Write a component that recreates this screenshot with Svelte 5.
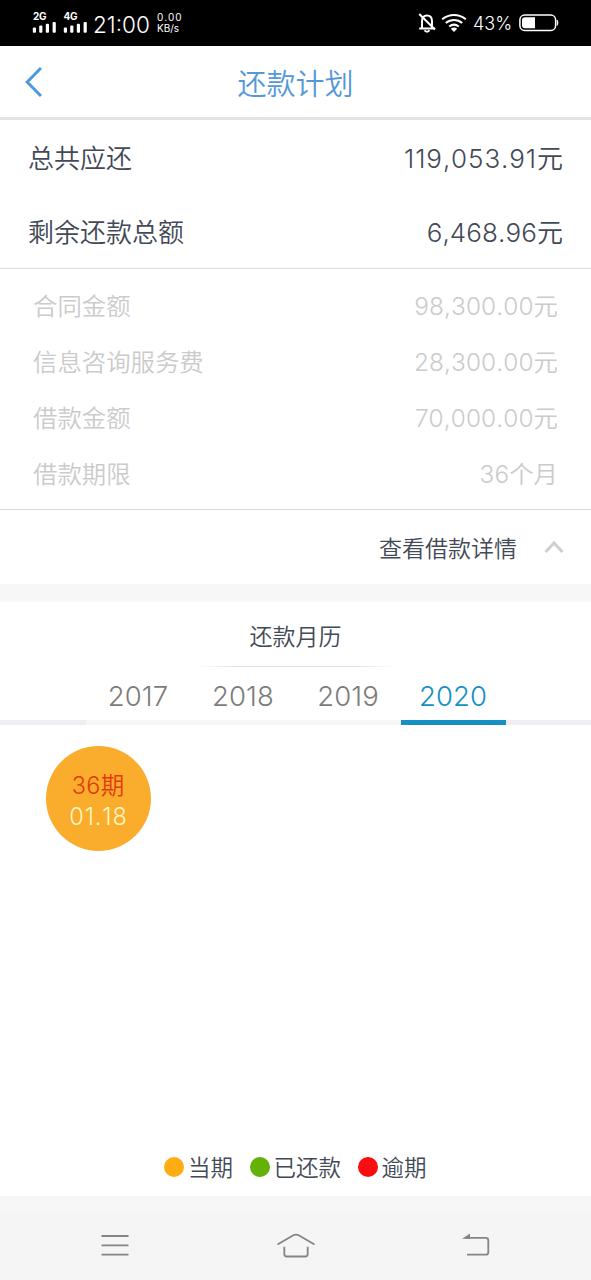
<script lang="ts">
  const totals = [
    { label: "总共应还", amount: "119,053.91", unit: "元" },
    { label: "剩余还款总额", amount: "6,468.96", unit: "元" },
  ];

  const details = [
    { label: "合同金额", amount: "98,300.00", unit: "元" },
    { label: "信息咨询服务费", amount: "28,300.00", unit: "元" },
    { label: "借款金额", amount: "70,000.00", unit: "元" },
    { label: "借款期限", amount: "36", unit: "个月" },
  ];

  const years = ["2017", "2018", "2019", "2020"];

  const periods: Record<string, { no: number; date: string; status: string }[]> = {
    "2020": [{ no: 36, date: "01.18", status: "current" }],
  };

  const legend = [
    { status: "current", label: "当期" },
    { status: "paid", label: "已还款" },
    { status: "overdue", label: "逾期" },
  ];

  let year = $state("2020");
  let expanded = $state(true);
  let shown = $derived(periods[year] ?? []);
</script>

{#snippet signal(label: string)}
  <div class="signal">
    <span>{label}</span>
    <svg width="24" height="11" viewBox="0 0 24 11" fill="#fff">
      <rect x="0.8" y="5.5" width="3.2" height="5.2" rx="1" />
      <rect x="7.2" y="3.6" width="3.2" height="7.1" rx="1" />
      <rect x="13.8" y="1.8" width="3.2" height="8.9" rx="1" />
      <rect x="20.6" y="0" width="3.2" height="10.7" rx="1" />
    </svg>
  </div>
{/snippet}

<div class="screen">
  <div class="status">
    {@render signal("2G")}
    {@render signal("4G")}
    <span class="clock">21:00</span>
    <div class="speed">
      <span class="rate">0.00</span>
      <span>KB/s</span>
    </div>
    <div class="status-right">
      <svg width="18" height="20" viewBox="0 0 18 20" fill="none" stroke="#fff" stroke-width="2">
        <path d="M4 15.5V8.2C4 4.6 6 2.5 9 2.5s5 2.1 5 5.7v7.3M1.200 15.500h15.600" />
        <path d="M6.500 17.300c1.200 1.800 3.800 1.800 5 0M1.200 1l15.800 15.500" />
      </svg>
      <svg class="wifi" width="26" height="20" viewBox="0 0 26 20" fill="none" stroke="#fff" stroke-width="2">
        <path d="M1.200 6.300c7-5.900 16.600-5.900 23.600 0M4.800 10c4.900-4.100 11.500-4.100 16.400 0M8.200 13.600c3-2.500 6.600-2.500 9.600 0" />
        <path d="M9.800 15.700c2-1.600 4.400-1.600 6.400 0L13 19z" fill="#fff" stroke="none" />
      </svg>
      <span class="percent">43%</span>
      <svg width="40" height="18" viewBox="0 0 40 18" fill="none">
        <rect x="0.9" y="1" width="35.7" height="15.5" rx="4.8" stroke="#fff" stroke-width="1.5" />
        <path d="M6 3.200h10v11.100H6a3 3 0 0 1-3-3V6.200a3 3 0 0 1 3-3z" fill="#fff" />
        <path d="M38 6c1.300.8 1.300 4.700 0 5.500z" fill="#fff" stroke="#fff" stroke-width="0.6" />
      </svg>
    </div>
  </div>

  <header class="header">
    <button type="button" class="back" aria-label="返回">
      <svg width="18" height="32" viewBox="0 0 18 32" fill="none" stroke="#4b9ae0" stroke-width="3">
        <path d="M17 2L3.200 16L17 30" />
      </svg>
    </button>
    <h1>还款计划</h1>
  </header>

  <section class="totals">
    {#each totals as row (row.label)}
      <div class="total-row">
        <span>{row.label}</span>
        <span><span class="num">{row.amount}</span>{row.unit}</span>
      </div>
    {/each}
  </section>

  {#if expanded}
    <section class="details">
      {#each details as row (row.label)}
        <div class="detail-row">
          <span>{row.label}</span>
          <span><span class="num">{row.amount}</span>{row.unit}</span>
        </div>
      {/each}
    </section>
  {/if}

  <button type="button" class="toggle" aria-expanded={expanded} onclick={() => (expanded = !expanded)}>
    <span>查看借款详情</span>
    <svg class:collapsed={!expanded} width="20" height="14" viewBox="0 0 20 14" fill="none" stroke="#cfcfcf" stroke-width="3">
      <path d="M1.500 12L10 3l8.500 9" />
    </svg>
  </button>

  <section class="calendar">
    <h2>还款月历</h2>
    <div class="divider"></div>
    <div class="tabs">
      {#each years as y (y)}
        <button type="button" class="tab num" class:tab-active={y === year} onclick={() => (year = y)}>{y}</button>
      {/each}
    </div>
    <div class="periods">
      {#each shown as p (p.no)}
        <div class="period {p.status}">
          <span class="period-no"><span class="num">{p.no}</span>期</span>
          <span class="period-date num">{p.date}</span>
        </div>
      {/each}
    </div>
    <div class="legend">
      {#each legend as item (item.status)}
        <div class="legend-item">
          <i class="dot {item.status}"></i>
          <span>{item.label}</span>
        </div>
      {/each}
    </div>
  </section>

  <nav class="nav">
    <svg width="28" height="24" viewBox="0 0 28 24" fill="none" stroke="#858585" stroke-width="1.800">
      <path d="M0.500 3h27M0.500 12.300h27M0.500 21.700h27" />
    </svg>
    <svg width="40" height="26" viewBox="0 0 40 26" fill="none" stroke="#858585" stroke-width="1.800" stroke-linejoin="round">
      <path d="M1.500 12.500L17.300 3.300q2.700-1.400 5.400 0L38.500 12.500" />
      <path d="M8.300 14.800v7.200q0 2.500 2.500 2.500h18.400q2.500 0 2.500-2.500v-7.200" />
    </svg>
    <svg width="28" height="24" viewBox="0 0 28 24" fill="none" stroke="#858585" stroke-width="1.800">
      <path d="M3 4.900h20.800q2.500 0 2.500 2.500v11.800q0 2.500-2.500 2.500H5" />
      <path d="M0 5.700L8 0.600v5.100z" fill="#858585" stroke="none" />
    </svg>
  </nav>
</div>

<style>
  :global(body) {
    margin: 0;
  }

  .screen {
    display: flex;
    flex-direction: column;
    height: 1280px;
    background: #fff;
    color: #434956;
    font-family: Inter, "Noto Sans CJK SC", sans-serif;
    font-weight: 350;
  }

  button {
    padding: 0;
    border: 0;
    background: none;
    font: inherit;
    color: inherit;
    cursor: pointer;
  }

  svg {
    display: block;
    flex-shrink: 0;
  }

  h1,
  h2 {
    margin: 0;
    font-weight: inherit;
  }

  .num {
    font-weight: 320;
    font-kerning: none;
    letter-spacing: 0.1px;
  }

  .status {
    display: flex;
    align-items: center;
    box-sizing: border-box;
    height: 46px;
    padding: 0 32px;
    background: #000;
    color: #fff;
  }

  .signal {
    width: 30.5px;
    font-size: 10px;
    font-weight: 700;
    line-height: 9px;
  }

  .signal span {
    display: block;
    margin: -1px 0 1px 1px;
    letter-spacing: -0.3px;
  }

  .clock {
    width: 63px;
    padding-top: 2px;
    font-size: 22.5px;
    font-weight: 350;
  }

  .speed {
    display: flex;
    flex-direction: column;
    padding-left: 1px;
    font-size: 10px;
    font-weight: 400;
    line-height: 11px;
  }

  .rate {
    letter-spacing: 1.1px;
  }

  .status-right {
    display: flex;
    align-items: center;
    margin-left: auto;
  }

  .wifi {
    margin-left: 5px;
  }

  .percent {
    width: 46px;
    margin-left: 6px;
    padding-top: 1px;
    font-size: 18px;
    font-weight: 350;
  }

  .header {
    display: flex;
    align-items: center;
    justify-content: center;
    position: relative;
    height: 71px;
    border-bottom: 3px solid #e2e4e4;
  }

  .header h1 {
    padding-top: 6px;
    font-size: 29px;
    line-height: 40px;
    color: #5598d8;
  }

  .back {
    position: absolute;
    left: 24px;
    top: 20px;
  }

  .totals {
    border-bottom: 1px solid #dcdcde;
    font-size: 26px;
  }

  .total-row,
  .detail-row {
    display: flex;
    align-items: center;
    justify-content: space-between;
    box-sizing: border-box;
  }

  .total-row {
    height: 74px;
    padding: 0 28px 2px;
  }

  .total-row:first-child .num {
    letter-spacing: 0.9px;
  }

  .details {
    padding: 7px 33px 9px;
    border-bottom: 1px solid #d8dae2;
    font-size: 24.4px;
    color: #cbcbcb;
  }

  .detail-row {
    height: 56px;
  }

  .toggle {
    display: flex;
    align-items: center;
    justify-content: flex-end;
    gap: 27px;
    height: 74px;
    padding-right: 27px;
    font-size: 23px;
  }

  .collapsed {
    transform: rotate(180deg);
  }

  .calendar {
    display: flex;
    flex: 1;
    flex-direction: column;
    border-top: 18px solid #f7f7f7;
  }

  .calendar h2 {
    height: 64px;
    font-size: 23px;
    line-height: 70px;
    text-align: center;
  }

  .divider {
    width: 200px;
    height: 1px;
    margin: 0 auto;
    background: linear-gradient(to right, transparent, #e2e2e4 20%, #e2e2e4 80%, transparent);
  }

  .tabs {
    display: flex;
    justify-content: center;
    height: 58px;
    background: linear-gradient(#eeeef3, #eeeef3) bottom / 100% 5px no-repeat;
  }

  .tab {
    box-sizing: border-box;
    width: 105px;
    padding-top: 4px;
    border-bottom: 5px solid #f7f7f8;
    font-size: 27.5px;
    color: #7c7c7c;
  }

  .tab-active {
    border-color: #168fc5;
    color: #168fc5;
  }

  .periods {
    display: flex;
    flex: 1;
    align-items: flex-start;
    padding: 21px 46px;
  }

  .period {
    display: flex;
    flex-direction: column;
    align-items: center;
    justify-content: center;
    box-sizing: border-box;
    width: 105px;
    height: 105px;
    padding-top: 4px;
    border-radius: 50%;
    color: #fff6c4;
    font-size: 23.5px;
    line-height: 31px;
  }

  .period.current {
    background: #faad2c;
  }

  .period.paid {
    background: #62b20a;
  }

  .period.overdue {
    background: #fb0c10;
  }

  .period-no {
    margin-left: -1px;
    color: #e23a0c;
  }

  .period-no .num {
    letter-spacing: 0.4px;
  }

  .period-date {
    letter-spacing: 0.9px;
  }

  .legend {
    display: flex;
    justify-content: center;
    gap: 17px;
    padding-bottom: 11px;
    font-size: 22.5px;
    line-height: 34px;
  }

  .legend-item {
    display: flex;
    align-items: center;
    gap: 3.5px;
  }

  .legend-item span {
    padding-top: 2px;
  }

  .dot {
    width: 20px;
    height: 20px;
    border-radius: 50%;
  }

  .dot.current {
    background: #fdad12;
  }

  .dot.paid {
    background: #62b20a;
  }

  .dot.overdue {
    background: #fb0c10;
  }

  .nav {
    display: flex;
    justify-content: space-between;
    align-items: center;
    box-sizing: border-box;
    height: 84px;
    padding: 0 101px 3px;
    border-top: 16px solid #f7f7f7;
    background: #f5f5f5;
  }
</style>
